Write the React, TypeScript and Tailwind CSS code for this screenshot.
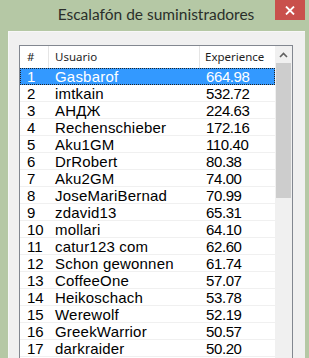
import React from "react";

const rows = [
  ["1", "Gasbarof", "664.98"],
  ["2", "imtkain", "532.72"],
  ["3", "АНДЖ", "224.63"],
  ["4", "Rechenschieber", "172.16"],
  ["5", "Aku1GM", "110.40"],
  ["6", "DrRobert", "80.38"],
  ["7", "Aku2GM", "74.00"],
  ["8", "JoseMariBernad", "70.99"],
  ["9", "zdavid13", "65.31"],
  ["10", "mollari", "64.10"],
  ["11", "catur123 com", "62.60"],
  ["12", "Schon gewonnen", "61.74"],
  ["13", "CoffeeOne", "57.07"],
  ["14", "Heikoschach", "53.78"],
  ["15", "Werewolf", "52.19"],
  ["16", "GreekWarrior", "50.57"],
  ["17", "darkraider", "50.20"],
];

const App = () => {
  return (
    <div className="w-[309px] h-[358px] bg-[#b5c8a5] flex flex-col overflow-hidden">
      {/* barra de titulo */}
      <div className="relative h-[31px] flex items-center justify-center shrink-0">
        <span className="text-[15.5px] text-[#2a2f2a] font-['Lato',sans-serif] pl-[3px] pb-[1px]">
          Escalafón de suministradores
        </span>
        <div className="absolute top-0 left-[275px] w-[30px] h-[20px] bg-[#c9504c] flex items-center justify-center">
          <svg width="10" height="9" viewBox="0 0 10 9">
            <path d="M1 0.5 L9 8.5 M9 0.5 L1 8.5" stroke="white" strokeWidth="1.8" />
          </svg>
        </div>
      </div>
      <div className="flex-1 ml-[8px] mr-[4px] bg-[#f0f0f0] border-t border-l border-[#f7f7f7] pl-[10px] pt-[13px]">
        <div className="w-[274px] h-[400px] border border-[#828790] bg-white flex">
          <div className="w-[255px] flex flex-col">
            <div className="h-[22px] flex text-[11.5px] text-[#1e1e1e] font-['Noto_Sans',sans-serif] shrink-0">
              <div className="w-[29px] border-r border-[#e5e5e5] pl-[7px] flex items-center">#</div>
              <div className="w-[151px] border-r border-[#e5e5e5] pl-[6px] flex items-center">Usuario</div>
              <div className="flex-1 pl-[5px] flex items-center">Experience</div>
            </div>
            {rows.map((r, i) => (
              <div
                key={r[0]}
                className={`h-[17px] flex items-center text-[15px] leading-none font-['Liberation_Sans',Arial,sans-serif] shrink-0 ${
                  i === 0
                    ? "bg-[#3399ff] text-white outline outline-1 outline-dotted outline-[#222] -outline-offset-1"
                    : "text-black border-b border-[#f0f0f0]"
                }`}
              >
                <div className="w-[29px] pl-[7px]">{r[0]}</div>
                <div className="w-[151px] pl-[6px] tracking-[0.2px]">{r[1]}</div>
                <div className="flex-1 pl-[6px] tracking-[-0.4px]">{r[2]}</div>
              </div>
            ))}
          </div>
          {/* scrollbar */}
          <div className="w-[17px] bg-[#f0f0f0] flex flex-col">
            <div className="h-[17px] flex items-center justify-center">
              <svg width="9" height="6" viewBox="0 0 9 6">
                <path d="M1 5 L4.5 1.5 L8 5" stroke="#606060" strokeWidth="1.6" fill="none" />
              </svg>
            </div>
            <div className="h-[135px] mx-[1px] bg-[#cdcdcd]"></div>
          </div>
        </div>
      </div>
    </div>
  );
};

export default App;
